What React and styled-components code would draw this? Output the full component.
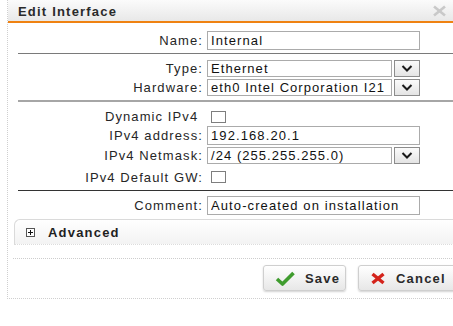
import React from "react";
import styled, { createGlobalStyle } from "styled-components";

const GlobalStyle = createGlobalStyle`
  html, body {
    margin: 0;
    padding: 0;
    background: #fff;
    overflow: hidden;
  }
  body {
    font-family: "Liberation Sans", Arial, sans-serif;
    font-size: 13px;
    color: #222;
  }
`;

function Chevron() {
  return (
    <svg width="12" height="7" viewBox="0 0 12 7">
      <polyline points="1.5,1 6,5.5 10.5,1" fill="none" stroke="#1a1a1a" strokeWidth="2" />
    </svg>
  );
}

function CloseIcon() {
  return (
    <svg width="15" height="12" viewBox="0 0 15 12">
      <line x1="2" y1="1.5" x2="13" y2="10.5" stroke="#c9c9c9" strokeWidth="2.6" />
      <line x1="13" y1="1.5" x2="2" y2="10.5" stroke="#c9c9c9" strokeWidth="2.6" />
    </svg>
  );
}

function CheckIcon() {
  return (
    <svg width="20" height="15" viewBox="0 0 20 15">
      <polyline points="2,8 7.5,13 18.5,2" fill="none" stroke="#3f9c2e" strokeWidth="3.6" strokeLinejoin="round" />
    </svg>
  );
}

function CrossIcon() {
  return (
    <svg width="16" height="13" viewBox="0 0 16 13">
      <line x1="2.5" y1="2" x2="13.5" y2="11" stroke="#d4231b" strokeWidth="3.4" />
      <line x1="13.5" y1="2" x2="2.5" y2="11" stroke="#d4231b" strokeWidth="3.4" />
    </svg>
  );
}

function PlusBox() {
  return (
    <svg width="9" height="9" viewBox="0 0 9 9">
      <rect x="0.5" y="0.5" width="8" height="8" fill="#fff" stroke="#555" />
      <line x1="2" y1="4.5" x2="7" y2="4.5" stroke="#111" />
      <line x1="4.5" y1="2" x2="4.5" y2="7" stroke="#111" />
    </svg>
  );
}

export default function App() {
  return (
    <>
      <GlobalStyle />
      <Page>
        <Dialog>
          <Header>
            <Title>Edit Interface</Title>
            <CloseIcon />
          </Header>
          <Body>
            <Row h={21}>
              <Label>Name:</Label>
              <TextInput readOnly value="Internal" />
            </Row>
            <Rule color="#7a7a7a" top={2} bottom={5} />
            <Row h={19}>
              <Label>Type:</Label>
              <Select>
                <SelectValue>Ethernet</SelectValue>
                <SelectButton><Chevron /></SelectButton>
              </Select>
            </Row>
            <Row h={19}>
              <Label>Hardware:</Label>
              <Select>
                <SelectValue>eth0 Intel Corporation I21</SelectValue>
                <SelectButton><Chevron /></SelectButton>
              </Select>
            </Row>
            <Rule color="#a6a6a6" size={2} top={3} bottom={5} />
            <Row h={19}>
              <Label>Dynamic IPv4&nbsp;</Label>
              <Check />
            </Row>
            <Row h={19}>
              <Label>IPv4 address:</Label>
              <TextInput readOnly value="192.168.20.1" />
            </Row>
            <Row h={21}>
              <Label>IPv4 Netmask:</Label>
              <Select>
                <SelectValue>/24 (255.255.255.0)</SelectValue>
                <SelectButton><Chevron /></SelectButton>
              </Select>
            </Row>
            <Row h={22}>
              <Label>IPv4 Default GW:</Label>
              <Check />
            </Row>
            <Rule color="#333" top={2} bottom={5} />
            <Row h={19}>
              <Label>Comment:</Label>
              <TextInput readOnly value="Auto-created on installation" />
            </Row>
            <Advanced>
              <PlusBox />
              <AdvancedTitle>Advanced</AdvancedTitle>
            </Advanced>
            <DottedRule />
            <ButtonBar>
              <Button w={83}>
                <CheckIcon />
                <span>Save</span>
              </Button>
              <Button w={98}>
                <CrossIcon />
                <span>Cancel</span>
              </Button>
            </ButtonBar>
          </Body>
        </Dialog>
      </Page>
    </>
  );
}

const Page = styled.div`
  width: 453px;
  height: 326px;
  overflow: hidden;
  padding-left: 7px;
  box-sizing: border-box;
`;

const Dialog = styled.div`
  width: 464px;
  border-left: 1px dotted #cfcfcf;
  border-bottom: 1px dotted #cfcfcf;
  background: #fff;
`;

const Header = styled.div`
  display: flex;
  align-items: center;
  justify-content: space-between;
  height: 21px;
  padding: 0 25px 0 10px;
  background: linear-gradient(#fbfbfb, #e8e8e8);
  border-bottom: 2px solid #ef8212;
`;

const Title = styled.div`
  font-weight: bold;
  font-size: 13px;
  letter-spacing: 1.2px;
  color: #2a2a2a;
  padding-top: 1px;
`;

const Body = styled.div`
  padding-top: 7px;
`;

const Row = styled.div`
  display: flex;
  align-items: center;
  height: ${(p) => p.h}px;
`;

const Label = styled.div`
  width: 195px;
  margin-right: 4px;
  text-align: right;
  white-space: nowrap;
  letter-spacing: 1.1px;
  color: #262626;
`;

const TextInput = styled.input`
  width: 213px;
  height: 19px;
  box-sizing: border-box;
  margin: 0;
  padding: 0 3px;
  border: 1px solid #ababab;
  font-family: "Liberation Sans", Arial, sans-serif;
  font-size: 13px;
  letter-spacing: 1.1px;
  color: #111;
  background: #fff;
  outline: none;
`;

const Select = styled.div`
  display: flex;
  gap: 2px;
  width: 213px;
  height: 17px;
`;

const SelectValue = styled.div`
  flex: 1;
  min-width: 0;
  overflow: hidden;
  white-space: nowrap;
  border: 1px solid #ababab;
  padding: 0 3px;
  line-height: 15px;
  letter-spacing: 1.05px;
  color: #111;
`;

const SelectButton = styled.div`
  width: 26px;
  box-sizing: border-box;
  display: flex;
  align-items: center;
  justify-content: center;
  border: 1px solid #8c8c8c;
  background: linear-gradient(#fbfbfb, #e4e4e4);
`;

const Check = styled.span`
  display: inline-block;
  width: 15px;
  height: 12px;
  box-sizing: border-box;
  margin-left: 4px;
  border: 1px solid #7e7e7e;
  background: #fff;
`;

const Rule = styled.div`
  margin: ${(p) => p.top}px 0 ${(p) => p.bottom}px 10px;
  height: ${(p) => p.size || 1}px;
  background: ${(p) => p.color};
`;

const Advanced = styled.div`
  display: flex;
  align-items: center;
  gap: 13px;
  height: 24px;
  margin: 4px 0 0 6px;
  padding-left: 11px;
  border-top: 1px solid #dadada;
  border-left: 1px solid #dadada;
  border-bottom: 1px dotted #dcdcdc;
  border-top-left-radius: 6px;
  background: linear-gradient(#ffffff, #f3f3f3);
`;

const AdvancedTitle = styled.span`
  font-weight: bold;
  letter-spacing: 1.2px;
  color: #1f1f1f;
`;

const DottedRule = styled.div`
  margin: 13px 0 0 5px;
  border-top: 1px dotted #cdcdcd;
`;

const ButtonBar = styled.div`
  display: flex;
  justify-content: flex-end;
  gap: 12px;
  padding: 6px 16px 7px 0;
`;

const Button = styled.div`
  display: flex;
  align-items: center;
  gap: 10px;
  width: ${(p) => p.w}px;
  height: 26px;
  box-sizing: border-box;
  padding-left: 11px;
  border: 1px solid #cfcfcf;
  border-radius: 3px;
  background: linear-gradient(#ffffff, #e7e7e7);
  box-shadow: 0 1px 2px rgba(0, 0, 0, 0.18);
  font-weight: bold;
  letter-spacing: 1.2px;
  color: #2a2a2a;
`;
